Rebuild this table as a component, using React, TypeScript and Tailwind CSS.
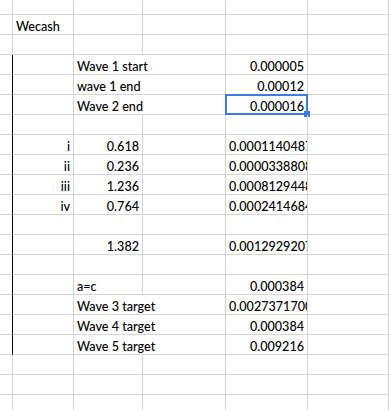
import React from 'react';

type Row = {
  b?: string;
  c?: string;
  cWide?: boolean;
  cRight?: boolean;
  e?: string;
  eClip?: boolean;
  selected?: boolean;
  edge?: boolean;
};

const ROWS: Row[] = [
  { b: 'Wecash' },
  {},
  { c: 'Wave 1 start', cWide: true, e: '0.000005', edge: true },
  { c: 'wave 1 end', cWide: true, e: '0.00012', edge: true },
  { c: 'Wave 2 end', cWide: true, e: '0.000016', selected: true, edge: true },
  { edge: true },
  { b: 'i', c: '0.618', cRight: true, e: '0.00011404872', eClip: true, edge: true },
  { b: 'ii', c: '0.236', cRight: true, e: '0.00003388080', eClip: true, edge: true },
  { b: 'iii', c: '1.236', cRight: true, e: '0.00081294480', eClip: true, edge: true },
  { b: 'iv', c: '0.764', cRight: true, e: '0.00024146840', eClip: true, edge: true },
  { edge: true },
  { c: '1.382', cRight: true, e: '0.00129292070', eClip: true, edge: true },
  { edge: true },
  { c: 'a=c', e: '0.000384', edge: true },
  { c: 'Wave 3 target', cWide: true, e: '0.00273717000', eClip: true, edge: true },
  { c: 'Wave 4 target', cWide: true, e: '0.000384', edge: true },
  { c: 'Wave 5 target', cWide: true, e: '0.009216', edge: true },
  {},
  {},
  {},
];

const cell = 'border-r border-b border-[#d4d4d4] h-[20px] flex items-end px-[3px] whitespace-nowrap';

export default function App() {
  return (
    <div
      className="w-[389px] h-[410px] overflow-hidden bg-white text-black text-[12.6px] font-medium leading-[15px]"
      style={{ fontFamily: 'Lato, "Open Sans", sans-serif' }}
    >
      <div className="grid grid-cols-[13px_61px_69px_83px_82px_81px]">
        {/* partial header row */}
        <div className="h-[15px] border-r border-b border-[#d4d4d4]" />
        <div className="h-[15px] border-r border-b border-[#d4d4d4]" />
        <div className="h-[15px] border-r border-b border-[#d4d4d4]" />
        <div className="h-[15px] border-r border-b border-[#d4d4d4]" />
        <div className="h-[15px] border-r border-b border-[#d4d4d4]" />
        <div className="h-[15px] border-r border-b border-[#d4d4d4]" />

        {ROWS.map((r, i) => (
          <React.Fragment key={i}>
            <div
              className={
                r.edge
                  ? 'h-[20px] border-b border-[#d4d4d4] border-r border-r-black'
                  : 'h-[20px] border-r border-b border-[#d4d4d4]'
              }
            />
            <div className={`${cell} ${r.b && r.b !== 'Wecash' ? 'justify-end' : ''}`}>{r.b}</div>
            {r.cWide ? (
              <div className={`${cell} col-span-2`}>{r.c}</div>
            ) : (
              <>
                <div className={`${cell} ${r.cRight ? 'justify-end' : ''}`}>{r.c}</div>
                <div className={cell} />
              </>
            )}
            <div className={`${cell} relative ${r.eClip ? 'overflow-hidden' : 'justify-end'}`}>
              {r.e}
              {r.selected && (
                <div className="absolute -left-[1px] -top-[1px] w-[83px] h-[21px] border-2 border-[#3a7ce6]">
                  <div className="absolute -right-[4px] -bottom-[4px] w-[6px] h-[6px] bg-[#3a7ce6]" />
                </div>
              )}
            </div>
            <div className={cell} />
          </React.Fragment>
        ))}
      </div>
    </div>
  );
}
